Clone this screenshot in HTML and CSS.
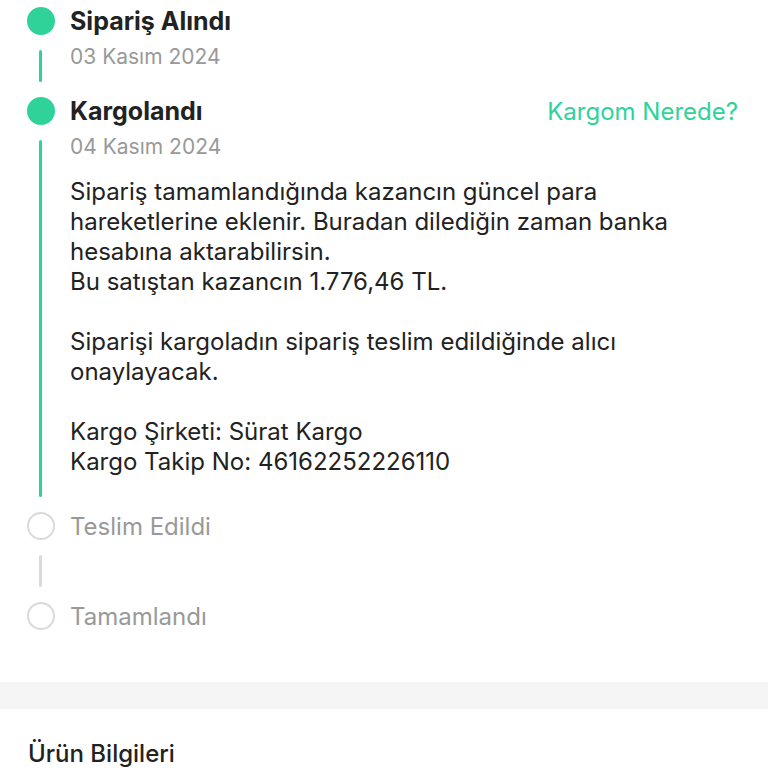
FILE: index.html
```html
<!DOCTYPE html>
<html lang="tr">
<head>
    <meta charset="UTF-8">
    <meta name="viewport" content="width=device-width, initial-scale=1.0">
    <title>Sipariş Durumu</title>
    <link rel="stylesheet" href="styles.css">
</head>
<body>
    <section class="timeline">
        <div class="step done">
            <div class="step-head">
                <span class="dot"></span>
                <h2 class="step-title">Sipariş Alındı</h2>
            </div>
            <div class="step-body">
                <span class="line"></span>
                <div class="step-info">
                    <div class="step-date">03 Kasım 2024</div>
                </div>
            </div>
        </div>
        <div class="step done">
            <div class="step-head">
                <span class="dot"></span>
                <h2 class="step-title">Kargolandı</h2>
                <a class="step-link" href="#">Kargom Nerede?</a>
            </div>
            <div class="step-body">
                <span class="line"></span>
                <div class="step-info">
                    <div class="step-date">04 Kasım 2024</div>
                    <p class="step-text">Sipariş tamamlandığında kazancın güncel para hareketlerine eklenir. Buradan dilediğin zaman banka hesabına aktarabilirsin.<br>Bu satıştan kazancın 1.776,46 TL.</p>
                    <p class="step-text">Siparişi kargoladın sipariş teslim edildiğinde alıcı onaylayacak.</p>
                    <p class="step-text">Kargo Şirketi: Sürat Kargo<br>Kargo Takip No: 46162252226110</p>
                </div>
            </div>
        </div>
        <div class="step">
            <div class="step-head">
                <span class="dot"></span>
                <h2 class="step-title">Teslim Edildi</h2>
            </div>
            <div class="step-body">
                <span class="line"></span>
                <div class="step-info"></div>
            </div>
        </div>
        <div class="step last">
            <div class="step-head">
                <span class="dot"></span>
                <h2 class="step-title">Tamamlandı</h2>
            </div>
        </div>
    </section>
    <div class="divider"></div>
    <section class="product">
        <h3>Ürün Bilgileri</h3>
    </section>
</body>
</html>
```
FILE: styles.css
```css
body {
    margin: 0;
    font-family: Inter, "Noto Sans", sans-serif;
    background-color: #fff;
    color: #222;
}

.timeline {
    padding: 7px 30px 52px 27px;
}

.step-head {
    display: flex;
    align-items: center;
    height: 28px;
}

.dot {
    width: 28px;
    height: 28px;
    border-radius: 50%;
    box-sizing: border-box;
    border: 2px solid #dadada;
    flex-shrink: 0;
    margin-right: 15px;
}

.step.done .dot {
    background-color: #2fd39a;
    border-color: #2fd39a;
}

.step-title {
    margin: 0;
    font-size: 24px;
    color: #999;
    font-weight: 400;
    flex: 1;
}

.step.done .step-title {
    color: #222;
    font-weight: 700;
    font-size: 25px;
}

.step-link {
    color: #2fd39a;
    font-size: 24px;
    text-decoration: none;
}

.step-body {
    display: flex;
    min-height: 62px;
}

.line {
    width: 3px;
    border-radius: 2px;
    background-color: #dadada;
    margin: 15px 27px 15px 12px;
    flex-shrink: 0;
}

.step.done .line {
    background-color: #2fd39a;
}

.step-info {
    padding: 7px 0 0 1px;
}

.step-date {
    font-size: 21px;
    line-height: 30px;
    color: #999;
}

.step-text {
    margin: 15px 0 0;
    font-size: 24px;
    line-height: 30px;
    color: #222;
}

.step-text + .step-text {
    margin-top: 30px;
}

.step-text:last-child {
    margin-bottom: 35px;
}

.divider {
    height: 27px;
    background-color: #f5f5f5;
}

.product {
    padding: 30px 28px;
}

.product h3 {
    margin: 0;
    font-size: 24px;
    font-weight: 500;
    color: #222;
}
```
